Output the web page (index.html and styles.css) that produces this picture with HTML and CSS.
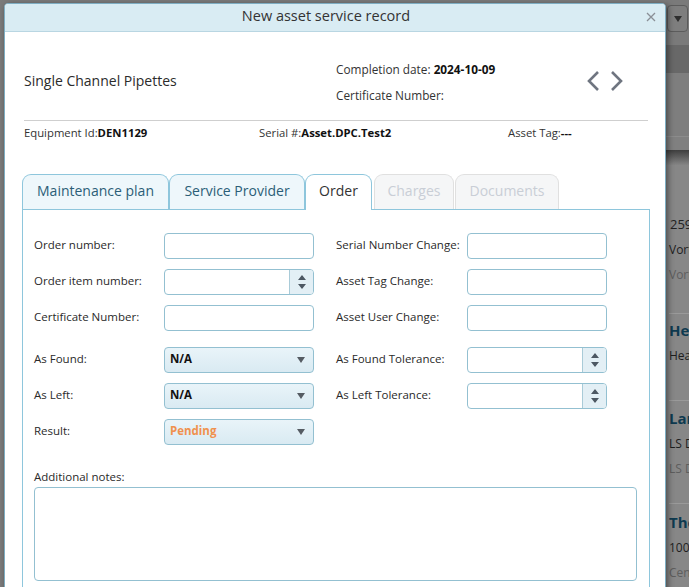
FILE: index.html
```html
<!DOCTYPE html>
<html>
<head>
<meta charset="utf-8">
<title>New asset service record</title>
<link rel="stylesheet" href="styles.css">
</head>
<body>
<div class="page">
  <div class="pg-top">
    <span class="pg-select"><svg class="tri" width="8" height="6" viewBox="0 0 8 6"><path d="M0 0H8L4 6Z"/></svg></span>
  </div>
  <div class="pg-band"></div>
  <div class="pg-area"></div>
  <div class="pg-shadow"></div>
  <div class="pg-list">
    <div class="pg-row r1">
      <div class="pg-num">259</div>
      <div class="pg-sub">Vort</div>
      <div class="pg-muted">Vort</div>
    </div>
    <div class="pg-row r2">
      <div class="pg-head">Hea</div>
      <div class="pg-sub">Hea</div>
    </div>
    <div class="pg-row r3">
      <div class="pg-head">Lar</div>
      <div class="pg-sub">LS D</div>
      <div class="pg-muted">LS D</div>
    </div>
    <div class="pg-row r4">
      <div class="pg-head">The</div>
      <div class="pg-sub">100,</div>
      <div class="pg-muted">Cen</div>
    </div>
  </div>
</div>

<div class="modal">
  <div class="titlebar">
    <span class="title">New asset service record</span>
    <span class="close"><svg width="10" height="10" viewBox="0 0 10 10"><path d="M1 1L9 9M9 1L1 9" stroke="#8a8f96" stroke-width="1.3" fill="none"/></svg></span>
  </div>
  <div class="mbody">
    <div class="head">
      <div class="asset-name">Single Channel Pipettes</div>
      <div class="asset-info">
        <div>Completion date: <b>2024-10-09</b></div>
        <div>Certificate Number:</div>
      </div>
      <div class="nav">
        <svg width="14" height="22" viewBox="0 0 14 22"><path d="M12 2L3 11L12 20" stroke="#6f7580" stroke-width="2.6" fill="none"/></svg>
        <svg width="14" height="22" viewBox="0 0 14 22"><path d="M2 2L11 11L2 20" stroke="#6f7580" stroke-width="2.6" fill="none"/></svg>
      </div>
    </div>
    <div class="rule"></div>
    <div class="ids">
      <div class="id-eq">Equipment Id:<b>DEN1129</b></div>
      <div class="id-serial">Serial #:<b>Asset.DPC.Test2</b></div>
      <div class="id-tag">Asset Tag:<b>---</b></div>
    </div>

    <div class="tabs">
      <div class="tab t-maint">Maintenance plan</div>
      <div class="tab t-prov">Service Provider</div>
      <div class="tab active t-order">Order</div>
      <div class="tab disabled t-charges">Charges</div>
      <div class="tab disabled t-docs">Documents</div>
    </div>
    <div class="panel">
      <div class="grid">
        <label class="lbl">Order number:</label>
        <div class="field"></div>
        <label class="lbl rl">Serial Number Change:</label>
        <div class="field narrow"></div>

        <label class="lbl">Order item number:</label>
        <div class="field spin"><span class="spin-btn"><svg width="8" height="14" viewBox="0 0 8 14"><path d="M4 0L8 5H0Z M0 9H8L4 14Z" fill="#4d5863"/></svg></span></div>
        <label class="lbl rl">Asset Tag Change:</label>
        <div class="field narrow"></div>

        <label class="lbl">Certificate Number:</label>
        <div class="field"></div>
        <label class="lbl rl">Asset User Change:</label>
        <div class="field narrow"></div>
      </div>

      <div class="grid g2">
        <label class="lbl">As Found:</label>
        <div class="field select"><span class="sel-val">N/A</span><svg class="sel-arrow" width="8" height="6" viewBox="0 0 8 6"><path d="M0 0H8L4 6Z" fill="#555c63"/></svg></div>
        <label class="lbl rl">As Found Tolerance:</label>
        <div class="field narrow spin"><span class="spin-btn"><svg width="8" height="14" viewBox="0 0 8 14"><path d="M4 0L8 5H0Z M0 9H8L4 14Z" fill="#4d5863"/></svg></span></div>

        <label class="lbl">As Left:</label>
        <div class="field select"><span class="sel-val">N/A</span><svg class="sel-arrow" width="8" height="6" viewBox="0 0 8 6"><path d="M0 0H8L4 6Z" fill="#555c63"/></svg></div>
        <label class="lbl rl">As Left Tolerance:</label>
        <div class="field narrow spin"><span class="spin-btn"><svg width="8" height="14" viewBox="0 0 8 14"><path d="M4 0L8 5H0Z M0 9H8L4 14Z" fill="#4d5863"/></svg></span></div>

        <label class="lbl">Result:</label>
        <div class="field select"><span class="sel-val pending">Pending</span><svg class="sel-arrow" width="8" height="6" viewBox="0 0 8 6"><path d="M0 0H8L4 6Z" fill="#555c63"/></svg></div>
      </div>

      <div class="notes-lbl">Additional notes:</div>
      <div class="notes"></div>
    </div>
  </div>
</div>
</body>
</html>
```
FILE: styles.css
```css
html, body {
  margin: 0;
  padding: 0;
}
body {
  width: 689px;
  height: 587px;
  overflow: hidden;
  background: #7b7b7b;
  font-family: "Open Sans", "Noto Sans", sans-serif;
  color: #333;
  position: relative;
}

/* background page (dimmed) */
.page {
  margin-left: 666px;
  width: 23px;
  height: 587px;
  overflow: hidden;
  background: #878787;
}
.pg-top {
  height: 45px;
  background: #7a7a7a;
  box-sizing: border-box;
  padding-top: 5px;
  padding-left: 1px;
}
.pg-select {
  display: flex;
  align-items: center;
  justify-content: center;
  width: 21px;
  height: 27px;
  box-sizing: border-box;
  border: 1px solid #5c5c5c;
  border-radius: 4px;
  background: #7e7e7e;
}
.pg-select .tri { fill: #2e2e2e; }
.pg-band {
  height: 28px;
  background: #686868;
}
.pg-area {
  height: 77px;
  background: #7e7e7e;
  box-shadow: inset 0 -13px 0 #808080, inset 0 -14px 0 #8c8c8c;
}
.pg-shadow {
  height: 15px;
  background: linear-gradient(#3e3e3e, #858585);
}
.pg-list {
  background: #878787;
  font-size: 12px;
  line-height: 25px;
  color: #222;
  padding-left: 3px;
  white-space: nowrap;
}
.pg-row {
  border-bottom: 1px solid #9a9a9a;
  box-sizing: border-box;
}
.r1 { padding-top: 47px; height: 149px; }
.r2 { padding-top: 4px; height: 87px; }
.r3 { padding-top: 5px; height: 103px; }
.r4 { padding-top: 6px; height: 90px; border-bottom: 0; }
.pg-num { font-size: 13px; padding-left: 1px; }
.pg-sub { color: #1e1e1e; }
.pg-head { font-size: 15px; font-weight: 700; color: #0e3a50; }
.pg-muted { color: #5e5e5e; }

/* modal */
.modal {
  position: absolute;
  left: 4px;
  top: 3px;
  width: 662px;
  height: 600px;
  box-sizing: border-box;
  background: #fff;
  border: 1px solid #7eaec3;
  border-radius: 4px 4px 0 0;
  box-shadow: 2px 2px 6px rgba(0, 0, 0, 0.45);
}
.titlebar {
  height: 28px;
  box-sizing: border-box;
  background: #d9ecf3;
  border-bottom: 1px solid #b9d6e2;
  border-radius: 3px 3px 0 0;
  display: flex;
  align-items: center;
  justify-content: center;
  padding-bottom: 5px;
  position: relative;
}
.title {
  font-size: 14.5px;
  color: #333;
  margin-left: -18px;
}
.close {
  position: absolute;
  right: 9px;
  top: 8px;
  display: flex;
}

.mbody {
  padding: 0 17px 0 19px;
}
.head {
  display: flex;
  align-items: center;
  height: 88px;
  box-sizing: border-box;
  padding-top: 10px;
}
.asset-name {
  width: 312px;
  font-size: 14px;
  color: #2b2b2b;
  margin-top: -2px;
}
.asset-info {
  width: 250px;
  font-size: 11.8px;
  line-height: 26px;
  color: #333;
  margin-top: 2px;
}
.asset-info b { color: #111; }
.nav {
  display: flex;
  gap: 10px;
}
.rule {
  height: 1px;
  background: #cfcfcf;
}
.ids {
  display: flex;
  font-size: 11.3px;
  line-height: 23px;
  color: #333;
}
.ids b { color: #111; }
.id-eq { width: 235px; }
.id-serial { width: 249px; }

.tabs {
  display: flex;
  margin-top: 30px;
  margin-left: -2px;
  height: 35px;
  gap: 1px;
}
.tab {
  box-sizing: border-box;
  height: 35px;
  border: 1px solid #8ec6dc;
  border-bottom: 0;
  border-radius: 9px 9px 0 0;
  background: #eef7fb;
  color: #2b5e77;
  font-size: 14px;
  display: flex;
  align-items: center;
  justify-content: center;
  padding-bottom: 3px;
}
.t-maint { width: 147px; }
.t-prov { width: 136px; margin-left: -1px; }
.t-order { width: 67px; margin-left: -1px; }
.t-charges { width: 80px; margin-left: 1px; }
.t-docs { width: 104px; }
.tab.active {
  background: #fff;
  color: #333;
  height: 36px;
  padding-bottom: 4px;
  position: relative;
  z-index: 1;
}
.tab.disabled {
  background: #f5f6f7;
  border-color: #e0e0e0;
  color: #c9ced6;
}

.panel {
  margin-left: -2px;
  width: 628px;
  height: 400px;
  box-sizing: border-box;
  border: 1px solid #8ec6dc;
  padding: 23px 0 0 11px;
}
.grid {
  display: grid;
  grid-template-columns: 130px 150px 153px 140px;
  grid-auto-rows: 26px;
  row-gap: 10px;
  align-items: center;
}
.g2 { margin-top: 16px; }
.lbl {
  font-size: 11.5px;
  color: #2a2a2a;
  white-space: nowrap;
  margin-top: -3px;
}
.rl { padding-left: 22px; }
.field {
  box-sizing: border-box;
  height: 26px;
  border: 1px solid #93c0d1;
  border-radius: 4px;
  background: #fff;
  display: flex;
  align-items: center;
  position: relative;
  overflow: hidden;
}
.spin { justify-content: flex-end; }
.spin-btn {
  width: 24px;
  height: 100%;
  box-sizing: border-box;
  border-left: 1px solid #a9cbd8;
  background: #e3eff5;
  display: flex;
  align-items: center;
  justify-content: center;
}
.select {
  background: linear-gradient(#e9f4f9, #d9eaf2);
  padding: 0 8px 0 5px;
  justify-content: space-between;
}
.sel-val {
  font-size: 11.5px;
  font-weight: 700;
  color: #111;
  margin-top: -4px;
}
.sel-val.pending { color: #f0914e; }

.notes-lbl {
  font-size: 11.5px;
  color: #2a2a2a;
  margin-top: 24px;
  line-height: 15px;
}
.notes {
  margin-top: 3px;
  width: 603px;
  height: 94px;
  box-sizing: border-box;
  border: 1px solid #93c0d1;
  border-radius: 4px;
}
```
